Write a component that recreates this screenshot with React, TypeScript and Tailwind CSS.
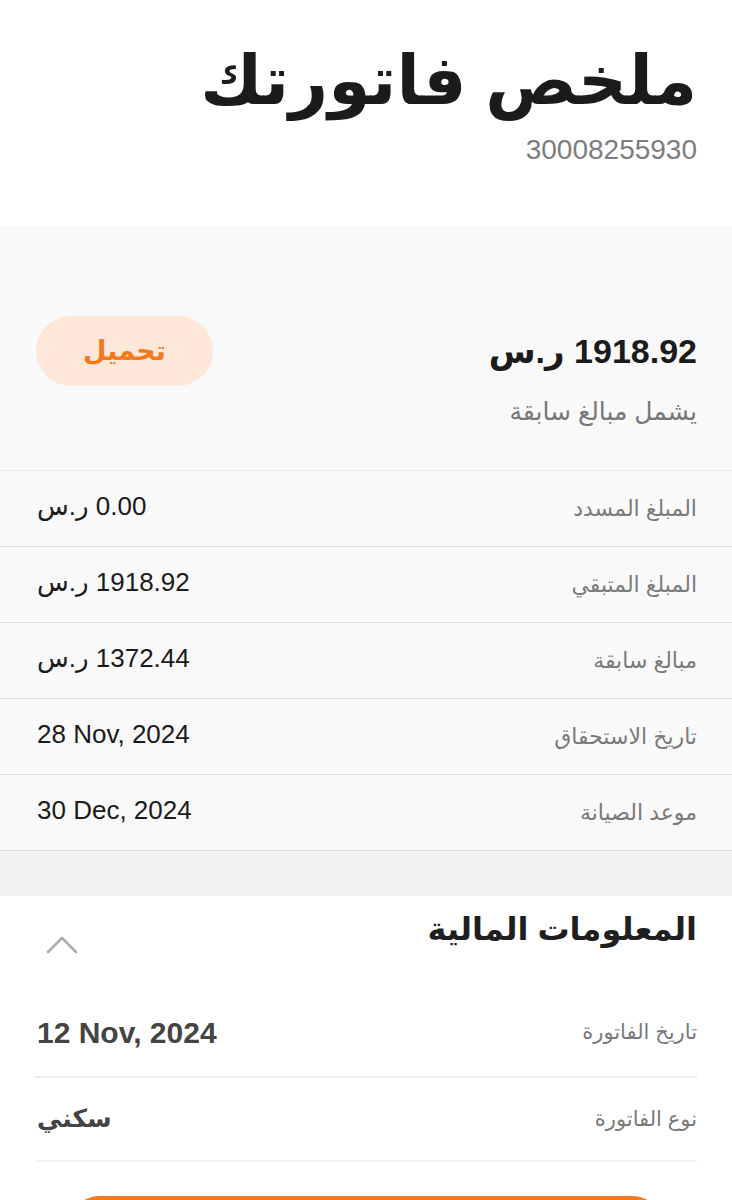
import React from 'react';

const font = { fontFamily: '"Liberation Sans", "DejaVu Sans", sans-serif' };

const summaryRows = [
  { label: 'المبلغ المسدد', value: '0.00 ر.س' },
  { label: 'المبلغ المتبقي', value: '1918.92 ر.س' },
  { label: 'مبالغ سابقة', value: '1372.44 ر.س' },
  { label: 'تاريخ الاستحقاق', value: '28 Nov, 2024', ltr: true },
  { label: 'موعد الصيانة', value: '30 Dec, 2024', ltr: true },
];

export default function App() {
  return (
    <div dir="rtl" className="w-[732px] h-[1200px] overflow-hidden bg-white text-[#1a1a1a]" style={font}>
      {/* header */}
      <div className="h-[226px] px-[35px] pt-[36px]">
        <h1 className="text-[68px] leading-[88px] font-bold text-[#1b1b1b]">ملخص فاتورتك</h1>
        <div className="mt-[10px] text-[28px] leading-[32px] text-[#7d7d7d]">30008255930</div>
      </div>

      {/* summary */}
      <div className="bg-[#f9f9f9]">
        <div className="px-[35px] pt-[90px] pb-[43px]">
          <div className="flex items-center justify-between">
            <div className="text-[34px] leading-[40px] font-semibold text-[#1b1b1b]">1918.92 ر.س</div>
            <button className="w-[177px] h-[70px] ml-[1px] rounded-full bg-[#fde7d9] text-[#f3791b] text-[27px] font-semibold">
              تحميل
            </button>
          </div>
          <div className="mt-[9px] text-[25px] leading-[32px] text-[#777]">يشمل مبالغ سابقة</div>
        </div>
        <div className="border-t border-[#e6e6e6]">
          {summaryRows.map((row) => (
            <div key={row.label} className="h-[76px] flex items-center justify-between px-[35px] border-b border-[#dcdcdc]">
              <span className="text-[22px] text-[#7a7a7a]">{row.label}</span>
              <span dir={row.ltr ? 'ltr' : undefined} className="text-[26px] text-[#1b1b1b] pl-[2px] pb-[4px]">{row.value}</span>
            </div>
          ))}
        </div>
      </div>

      <div className="h-[45px] bg-[#f2f2f2]" />

      {/* financial info */}
      <div className="px-[35px]">
        <div className="h-[98px] flex justify-between pt-[13px]">
          <h2 className="text-[32px] leading-[40px] font-semibold text-[#1f1f1f]">المعلومات المالية</h2>
          <svg width="32" height="20" viewBox="0 0 32 20" className="mt-[26px] ml-[11px]" fill="none">
            <polyline points="2,17 16,3 30,17" stroke="#adadad" strokeWidth="2.6" strokeLinecap="round" strokeLinejoin="round" />
          </svg>
        </div>
        <div className="h-[84px] pb-[6px] flex items-center justify-between border-b-2 border-[#ececec]">
          <span className="text-[21px] text-[#7a7a7a]">تاريخ الفاتورة</span>
          <span dir="ltr" className="text-[30px] font-semibold text-[#444] pl-[2px]">12 Nov, 2024</span>
        </div>
        <div className="h-[84px] flex items-center justify-between border-b-2 border-[#f3f3f3]">
          <span className="text-[21px] text-[#7a7a7a]">نوع الفاتورة</span>
          <span className="text-[25px] font-bold text-[#444] pl-[2px]">سكني</span>
        </div>
        <div className="pt-[34px] flex justify-center">
          <div className="w-[590px] h-[56px] rounded-full bg-[#f47b1e]" />
        </div>
      </div>
    </div>
  );
}
